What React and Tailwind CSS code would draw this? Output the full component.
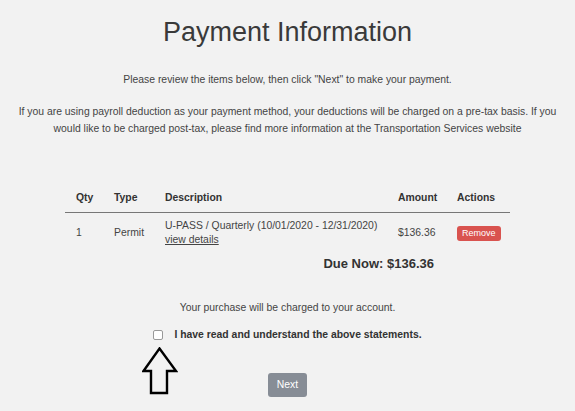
import React, { useState } from "react";

// Hollow "look here" arrow drawn over the page
const UpArrow = () => (
  <svg width="36" height="48" viewBox="0 0 36 48" className="block">
    <path
      d="M17.5 1.5 L34 24 L25 24 L25 46 L9 46 L9 24 L1.5 24 Z"
      fill="none"
      stroke="#000"
      strokeWidth="2.4"
      strokeLinejoin="miter"
    />
  </svg>
);

const items = [
  {
    id: 1,
    qty: 1,
    type: "Permit",
    description: "U-PASS / Quarterly (10/01/2020 - 12/31/2020)",
    amount: "$136.36",
  },
];

export default function App() {
  const [agreed, setAgreed] = useState(false);

  return (
    <div
      className="min-h-[411px] w-full bg-[#f2f2f2] text-[#333] overflow-hidden"
      style={{ fontFamily: '"Liberation Sans", Arial, sans-serif' }}
    >
      <h1 className="pt-[15px] text-center text-[27px] leading-[34px] text-[#3a3a3a]">
        Payment Information
      </h1>

      <p className="mt-[24px] text-center text-[10.4px] leading-[14px] text-[#444]">
        Please review the items below, then click "Next" to make your payment.
      </p>

      <p className="mt-[16px] px-[16px] text-center text-[10.4px] leading-[17px] text-[#444]">
        If you are using payroll deduction as your payment method, your
        deductions will be charged on a pre-tax basis. If you would like to be
        charged post-tax, please find more information at the Transportation
        Services website
      </p>

      {/* Cart */}
      <div className="ml-[65px] mt-[54px] w-[445px]">
        <table className="w-full table-fixed border-collapse text-[10.4px] leading-[14px] text-[#444]">
          <thead>
            <tr className="border-b border-[#777] text-[#333]">
              <th className="w-[49px] pl-[11px] pb-[7px] text-left font-bold">Qty</th>
              <th className="w-[51px] pb-[7px] text-left font-bold">Type</th>
              <th className="w-[233px] pb-[7px] text-left font-bold">Description</th>
              <th className="w-[59px] pb-[7px] text-left font-bold">Amount</th>
              <th className="w-[53px] pb-[7px] text-left font-bold">Actions</th>
            </tr>
          </thead>
          <tbody>
            {items.map((item) => (
              <tr key={item.id}>
                <td className="pl-[11px] pt-[6px] pb-[4px] align-middle">{item.qty}</td>
                <td className="pt-[6px] pb-[4px] align-middle">{item.type}</td>
                <td className="pt-[6px] pb-[4px] align-middle">
                  {item.description}
                  <br />
                  <a href="#" className="text-[#444] underline">
                    view details
                  </a>
                </td>
                <td className="pt-[6px] pb-[4px] align-middle">{item.amount}</td>
                <td className="pt-[6px] pb-[4px] align-middle">
                  <button className="rounded-[3px] bg-[#d9534f] px-[5px] py-[1px] text-[9px] leading-[13px] text-white">
                    Remove
                  </button>
                </td>
              </tr>
            ))}
          </tbody>
        </table>
        <div className="mt-[5px] pr-[76px] text-right text-[13px] font-bold leading-[16px] text-[#333]">
          Due Now: $136.36
        </div>
      </div>

      <p className="mt-[29px] text-center text-[10.4px] leading-[14px] text-[#444]">
        Your purchase will be charged to your account.
      </p>

      <label className="mt-[13px] flex items-center justify-center gap-[11px] text-[10.4px] font-bold leading-[14px] text-[#333]">
        <input
          type="checkbox"
          checked={agreed}
          onChange={(e) => setAgreed(e.target.checked)}
          className="h-[10px] w-[10px] appearance-none rounded-[2px] border border-[#999] bg-white checked:bg-[#0d6efd]"
        />
        I have read and understand the above statements.
      </label>

      <div className="relative mt-[31px] flex justify-center">
        <div className="absolute left-[142px] top-[-26px]">
          <UpArrow />
        </div>
        <button
          disabled={!agreed}
          className="rounded-[3px] bg-[#878d96] px-[9px] py-[5px] text-[10.4px] leading-[14px] text-white"
        >
          Next
        </button>
      </div>
    </div>
  );
}
